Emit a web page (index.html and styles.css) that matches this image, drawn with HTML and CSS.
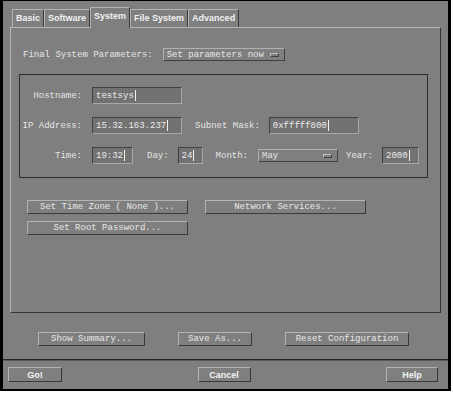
FILE: index.html
```html
<!DOCTYPE html>
<html lang="en">
<head>
    <meta charset="UTF-8">
    <meta name="viewport" content="width=device-width, initial-scale=1.0">
    <title>System Parameters</title>
    <link rel="stylesheet" href="styles.css">
</head>
<body>
    <div class="window">
        <div class="tabs">
            <div class="tab">Basic</div>
            <div class="tab">Software</div>
            <div class="tab active">System</div>
            <div class="tab">File System</div>
            <div class="tab">Advanced</div>
        </div>

        <div class="panel">
            <div class="final-row">
                <span class="label">Final System Parameters:</span>
                <div class="option params">Set parameters now<span class="indicator"></span></div>
            </div>

            <!-- network / clock settings -->
            <div class="group">
                <div class="row">
                    <span class="label lead">Hostname:</span>
                    <div class="field long">testsys<span class="caret"></span></div>
                </div>
                <div class="row">
                    <span class="label lead">IP Address:</span>
                    <div class="field long">15.32.163.237<span class="caret"></span></div>
                    <span class="label subnet">Subnet Mask:</span>
                    <div class="field long mask">0xfffff800<span class="caret"></span></div>
                </div>
                <div class="row">
                    <span class="label lead">Time:</span>
                    <div class="field time">19:32<span class="caret"></span></div>
                    <span class="label day">Day:</span>
                    <div class="field day-field">24<span class="caret"></span></div>
                    <span class="label month">Month:</span>
                    <div class="option month-menu">May<span class="indicator"></span></div>
                    <span class="label year">Year:</span>
                    <div class="field year-field">2000<span class="caret"></span></div>
                </div>
            </div>

            <div class="btn-grid">
                <div class="btn">Set Time Zone ( None )...</div>
                <div class="btn">Network Services...</div>
                <div class="btn">Set Root Password...</div>
            </div>
        </div>

        <div class="summary-row">
            <div class="btn summary">Show Summary...</div>
            <div class="btn save">Save As...</div>
            <div class="btn reset">Reset Configuration</div>
        </div>

        <div class="separator"></div>

        <div class="action-row">
            <div class="btn bold go">Go!</div>
            <div class="btn bold cancel">Cancel</div>
            <div class="btn bold help">Help</div>
        </div>
    </div>
</body>
</html>
```

FILE: styles.css
```css
* {
    margin: 0;
    padding: 0;
    box-sizing: border-box;
}

body {
    background: #ffffff;
    font-family: 'Liberation Mono', monospace;
    font-size: 9px;
    color: #e6e6e6;
}

.window {
    width: 451px;
    height: 391px;
    background: #7f7f7f;
    border-top: 1px solid #000;
    border-left: 3px solid #000;
    border-right: 3px solid #000;
    border-bottom: 2px solid #000;
    display: flex;
    flex-direction: column;
}

/* tabs */
.tabs {
    height: 26px;
    display: flex;
    align-items: flex-end;
    padding-left: 9px;
}

.tab {
    height: 18px;
    padding: 0 3px;
    line-height: 17px;
    font-family: 'Liberation Sans', Arial, sans-serif;
    font-weight: bold;
    font-size: 9px;
    color: #f2f2f2;
    background: #7f7f7f;
    border-top: 1px solid #b4b4b4;
    border-left: 1px solid #b4b4b4;
    border-right: 1px solid #3c3c3c;
}

.tab.active {
    height: 21px;
    line-height: 17px;
    margin-bottom: -1px;
    position: relative;
    z-index: 1;
}

/* main panel */
.panel {
    height: 286px;
    margin: 0 7px 0 7px;
    border-top: 1px solid #b4b4b4;
    border-left: 1px solid #b4b4b4;
    border-right: 1px solid #353535;
    border-bottom: 1px solid #353535;
}

.final-row {
    display: flex;
    align-items: center;
    margin-top: 20px;
    padding-left: 12px;
    height: 13px;
}

.label {
    white-space: pre;
    color: #e6e6e6;
}

.option {
    height: 13px;
    display: flex;
    align-items: center;
    justify-content: space-between;
    padding: 0 5px 0 3px;
    border-top: 1px solid #b0b0b0;
    border-left: 1px solid #b0b0b0;
    border-right: 1px solid #404040;
    border-bottom: 1px solid #404040;
    white-space: pre;
}

.params {
    width: 122px;
    margin-left: 10px;
}

.indicator {
    width: 9px;
    height: 4px;
    border-top: 1px solid #c0c0c0;
    border-left: 1px solid #c0c0c0;
    border-right: 1px solid #404040;
    border-bottom: 1px solid #404040;
}

/* group box */
.group {
    width: 409px;
    height: 104px;
    margin: 13px 0 0 8px;
    padding: 12px 0 0 0;
    border: 1px solid #2c2c2c;
    display: flex;
    flex-direction: column;
    gap: 13px;
}

.row {
    display: flex;
    align-items: center;
    height: 17px;
}

.lead {
    width: 62px;
    margin-right: 10px;
    text-align: right;
}

.field {
    height: 17px;
    padding-left: 3px;
    display: flex;
    align-items: center;
    background: #727272;
    border-top: 1px solid #404040;
    border-left: 1px solid #404040;
    border-right: 1px solid #a8a8a8;
    border-bottom: 1px solid #a8a8a8;
    color: #ececec;
    white-space: pre;
}

.caret {
    display: inline-block;
    width: 1px;
    height: 11px;
    margin-left: 1px;
    background: #f0f0f0;
}

.long { width: 90px; }
.subnet { margin-left: 13px; }
.mask { margin-left: 9px; }

.time { width: 41px; }
.day { margin-left: 14px; }
.day-field { width: 25px; margin-left: 9px; }
.month { margin-left: 13px; }
.month-menu { width: 80px; margin-left: 10px; }
.year { margin-left: 8px; }
.year-field { width: 37px; margin-left: 9px; }

/* buttons */
.btn {
    height: 14px;
    display: flex;
    align-items: center;
    justify-content: center;
    border-top: 1px solid #b4b4b4;
    border-left: 1px solid #b4b4b4;
    border-right: 1px solid #3a3a3a;
    border-bottom: 1px solid #3a3a3a;
    white-space: pre;
    color: #e8e8e8;
}

.btn.bold {
    height: 15px;
    font-family: 'Liberation Sans', Arial, sans-serif;
    font-weight: bold;
    color: #f4f4f4;
}

.btn-grid {
    display: grid;
    grid-template-columns: 161px 161px;
    column-gap: 17px;
    row-gap: 7px;
    margin: 22px 0 0 16px;
}

.summary-row {
    display: flex;
    justify-content: center;
    gap: 33px;
    margin-top: 19px;
    padding-right: 4px;
}

.summary { width: 107px; }
.save { width: 74px; }
.reset { width: 124px; }

.separator {
    margin-top: 13px;
    border-top: 1px solid #262626;
    border-bottom: 1px solid #5a5a5a;
}

.action-row {
    display: flex;
    justify-content: space-between;
    margin-top: 6px;
    padding: 0 10px 0 5px;
}

.go { width: 54px; }
.cancel { width: 53px; }
.help { width: 52px; }
```
